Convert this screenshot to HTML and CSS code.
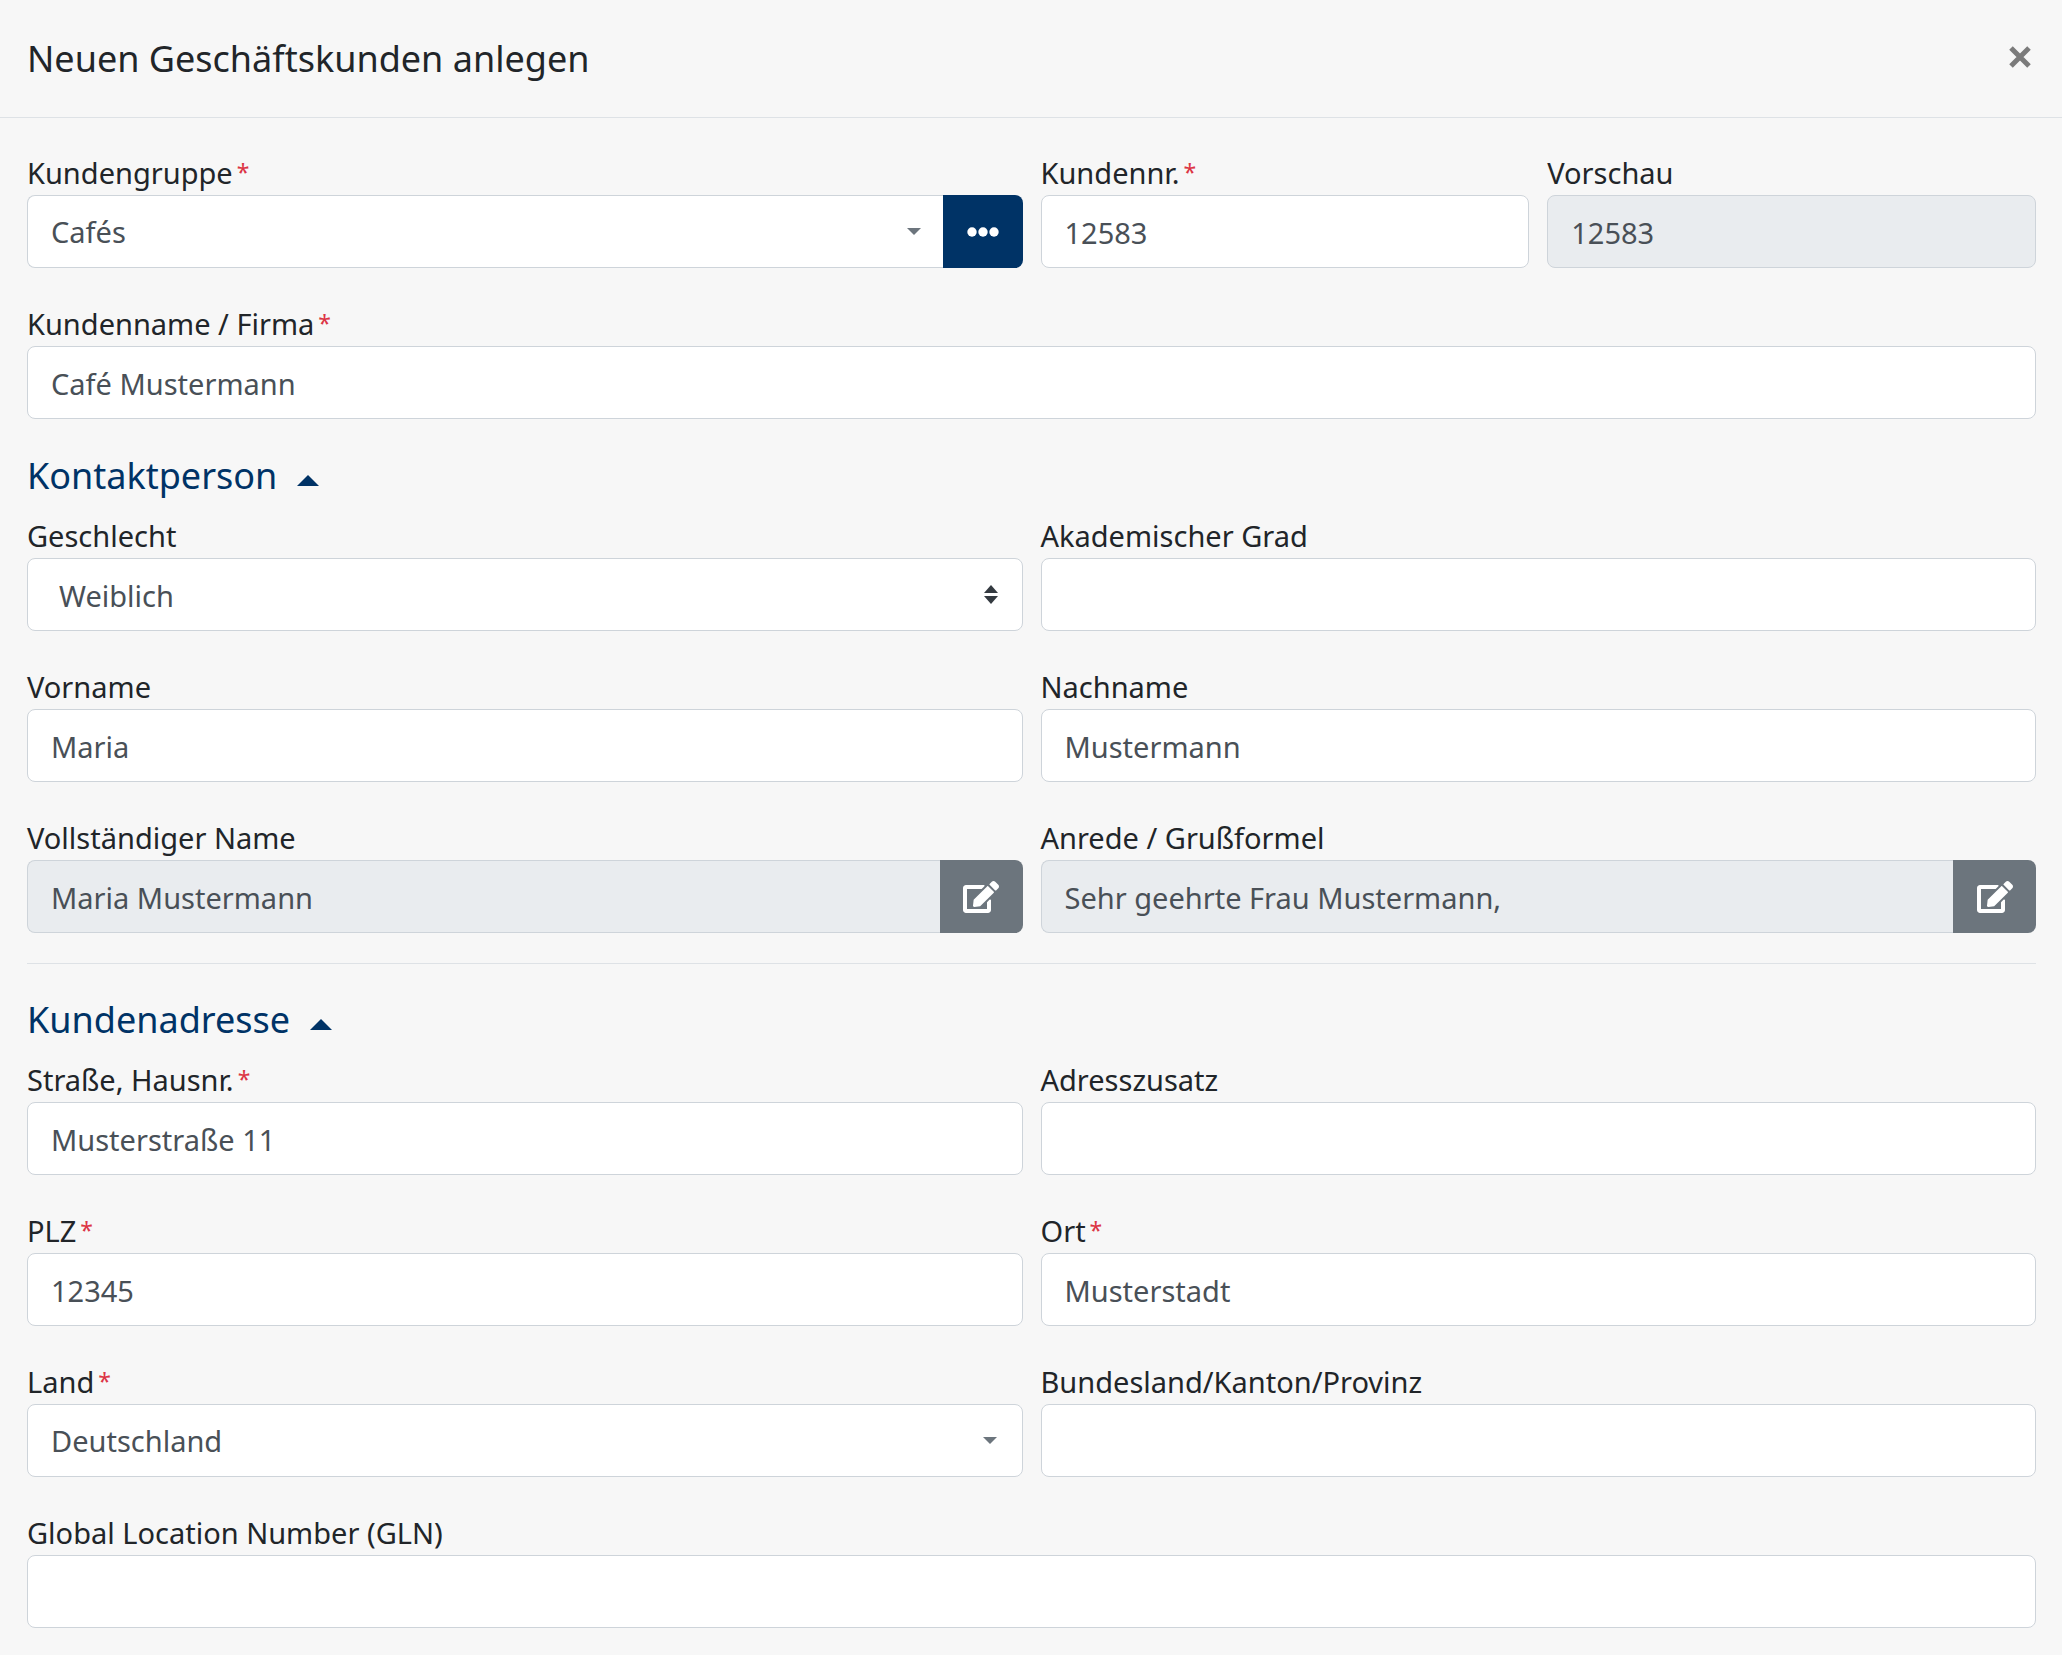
FILE: index.html
```html
<!DOCTYPE html>
<html lang="de">
<head>
<meta charset="utf-8">
<meta name="viewport" content="width=device-width, initial-scale=1">
<title>Neuen Geschäftskunden anlegen</title>
<link rel="stylesheet" href="styles.css">
</head>
<body>
<svg class="sprite" aria-hidden="true">
  <symbol id="icon-edit" viewBox="0 0 576 512"><path d="M402.6 83.2l90.2 90.2c3.800 3.800 3.800 10 0 13.800L274.400 405.600l-92.800 10.300c-12.400 1.400-22.900-9.100-21.500-21.500l10.300-92.800L388.800 83.200c3.800-3.800 10-3.800 13.800 0zm162-22.900l-48.800-48.800c-15.200-15.200-39.900-15.200-55.200 0l-35.400 35.400c-3.800 3.800-3.800 10 0 13.800l90.200 90.200c3.800 3.800 10 3.800 13.800 0l35.400-35.400c15.200-15.300 15.200-40 0-55.200zM384 346.200V448H64V128h229.800c3.200 0 6.200-1.300 8.500-3.500l40-40c7.600-7.600 2.200-20.500-8.500-20.500H48C21.500 64 0 85.500 0 112v352c0 26.500 21.500 48 48 48h352c26.500 0 48-21.500 48-48V306.200c0-10.700-12.900-16-20.500-8.500l-40 40c-2.200 2.300-3.500 5.300-3.500 8.500z"/></symbol>
  <symbol id="icon-caret-down" viewBox="0 0 14 7"><path d="M0 0h14L7 7z"/></symbol>
  <symbol id="icon-caret-up" viewBox="0 0 22 11"><path d="M0 11h22L11 0z"/></symbol>
</svg>

<header class="dialog-header">
  <h1 class="dialog-title">Neuen Geschäftskunden anlegen</h1>
  <button type="button" class="close" aria-label="Schließen">
    <svg width="22" height="22" viewBox="0 0 22 22"><path d="M2 2l18 18M20 2L2 20"/></svg>
  </button>
</header>

<form class="dialog-body">
  <div class="fields">
    <div class="field field-half">
      <label class="label" for="gruppe">Kundengruppe<span class="required">*</span></label>
      <div class="group">
        <div class="select-wrap">
          <select class="control" id="gruppe"><option>Cafés</option></select>
          <svg class="caret caret-grouped" width="14" height="7"><use href="#icon-caret-down"/></svg>
        </div>
        <button type="button" class="addon addon-primary" aria-label="Kundengruppe auswählen">
          <svg width="32" height="10" viewBox="0 0 32 10"><circle cx="5" cy="5" r="4.700"/><circle cx="16" cy="5" r="4.700"/><circle cx="27" cy="5" r="4.700"/></svg>
        </button>
      </div>
    </div>
    <div class="field">
      <label class="label" for="nummer">Kundennr.<span class="required">*</span></label>
      <input class="control" type="text" id="nummer" value="12583">
    </div>
    <div class="field">
      <label class="label" for="vorschau">Vorschau</label>
      <input class="control" type="text" id="vorschau" value="12583" readonly>
    </div>
    <div class="field field-full">
      <label class="label" for="firma">Kundenname / Firma<span class="required">*</span></label>
      <input class="control" type="text" id="firma" value="Café Mustermann">
    </div>
  </div>

  <section class="section">
    <h2 class="section-title"><button type="button" class="toggle" aria-expanded="true">Kontaktperson<svg class="toggle-caret" width="22" height="11"><use href="#icon-caret-up"/></svg></button></h2>
    <div class="fields">
      <div class="field field-half">
        <label class="label" for="geschlecht">Geschlecht</label>
        <div class="select-wrap">
          <select class="control control-native" id="geschlecht"><option>Weiblich</option></select>
          <svg class="caret caret-native" width="14" height="19" viewBox="0 0 14 19"><path d="M7 0l7 8H0zM7 19l7-8H0z"/></svg>
        </div>
      </div>
      <div class="field field-half">
        <label class="label" for="grad">Akademischer Grad</label>
        <input class="control" type="text" id="grad">
      </div>
      <div class="field field-half">
        <label class="label" for="vorname">Vorname</label>
        <input class="control" type="text" id="vorname" value="Maria">
      </div>
      <div class="field field-half">
        <label class="label" for="nachname">Nachname</label>
        <input class="control" type="text" id="nachname" value="Mustermann">
      </div>
      <div class="field field-half">
        <label class="label" for="vollname">Vollständiger Name</label>
        <div class="group">
          <input class="control" type="text" id="vollname" value="Maria Mustermann" readonly>
          <button type="button" class="addon addon-secondary" aria-label="Namen bearbeiten"><svg width="36" height="32"><use href="#icon-edit"/></svg></button>
        </div>
      </div>
      <div class="field field-half">
        <label class="label" for="anrede">Anrede / Grußformel</label>
        <div class="group">
          <input class="control" type="text" id="anrede" value="Sehr geehrte Frau Mustermann," readonly>
          <button type="button" class="addon addon-secondary" aria-label="Anrede bearbeiten"><svg width="36" height="32"><use href="#icon-edit"/></svg></button>
        </div>
      </div>
    </div>
  </section>

  <hr class="divider">

  <section class="section">
    <h2 class="section-title"><button type="button" class="toggle" aria-expanded="true">Kundenadresse<svg class="toggle-caret" width="22" height="11"><use href="#icon-caret-up"/></svg></button></h2>
    <div class="fields">
      <div class="field field-half">
        <label class="label" for="strasse">Straße, Hausnr.<span class="required">*</span></label>
        <input class="control" type="text" id="strasse" value="Musterstraße 11">
      </div>
      <div class="field field-half">
        <label class="label" for="zusatz">Adresszusatz</label>
        <input class="control" type="text" id="zusatz">
      </div>
      <div class="field field-half">
        <label class="label" for="plz">PLZ<span class="required">*</span></label>
        <input class="control" type="text" id="plz" value="12345">
      </div>
      <div class="field field-half">
        <label class="label" for="ort">Ort<span class="required">*</span></label>
        <input class="control" type="text" id="ort" value="Musterstadt">
      </div>
      <div class="field field-half">
        <label class="label" for="land">Land<span class="required">*</span></label>
        <div class="select-wrap">
          <select class="control" id="land"><option>Deutschland</option></select>
          <svg class="caret" width="14" height="7"><use href="#icon-caret-down"/></svg>
        </div>
      </div>
      <div class="field field-half">
        <label class="label" for="region">Bundesland/Kanton/Provinz</label>
        <input class="control" type="text" id="region">
      </div>
      <div class="field field-full">
        <label class="label" for="gln">Global Location Number (GLN)</label>
        <input class="control" type="text" id="gln">
      </div>
    </div>
  </section>
</form>
</body>
</html>
```

FILE: styles.css
```css
*,
*::before,
*::after {
  box-sizing: border-box;
}

body {
  margin: 0;
  background: #f7f7f7;
  color: #212529;
  font-family: "Segoe UI", "Noto Sans", sans-serif;
  font-size: 29px;
  line-height: 44px;
}

button,
input,
select {
  margin: 0;
  font: inherit;
}

svg {
  display: block;
  fill: currentColor;
}

.sprite {
  display: none;
}

/* Header */

.dialog-header {
  display: flex;
  align-items: center;
  justify-content: space-between;
  min-height: 118px;
  padding: 0 26px 0 27px;
  border-bottom: 1px solid #dee2e6;
}

.dialog-title {
  margin: 0;
  font-size: 36px;
  font-weight: 400;
  line-height: 48px;
}

.close {
  padding: 0 5px 4px;
  border: 0;
  background: none;
  color: #7b7b7b;
}

.close path {
  fill: none;
  stroke: currentColor;
  stroke-width: 5;
}

/* Form grid */

.dialog-body {
  padding: 30px 26px 27px 27px;
}

.fields {
  display: grid;
  grid-template-columns: repeat(4, minmax(0, 1fr));
  gap: 31px 18px;
}

.field-half {
  grid-column: span 2;
}

.field-full {
  grid-column: 1 / -1;
}

.label {
  display: block;
  padding-top: 3px;
}

.required {
  margin-left: 4px;
  color: #dc3545;
  font-size: 23px;
  line-height: 1;
  vertical-align: 3px;
}

/* Controls */

.control {
  display: block;
  width: 100%;
  height: 73px;
  padding: 2px 23px 0;
  border: 1px solid #ced4da;
  border-radius: 8px;
  background: #fff;
  color: #495057;
  appearance: none;
}

select.control {
  padding-top: 0;
}

.control[readonly] {
  background: #e9ecef;
}

select.control-native {
  padding-top: 2px;
  padding-left: 31px;
}

.select-wrap {
  position: relative;
  flex: 1;
}

.caret {
  position: absolute;
  top: 33px;
  right: 26px;
  color: #6c757d;
  pointer-events: none;
}

.caret-grouped {
  right: 22px;
}

.caret-native {
  top: 27px;
  right: 25px;
  color: #343a40;
}

.group {
  display: flex;
}

.group .control {
  flex: 1;
  min-width: 0;
  border-right: 0;
  border-radius: 8px 0 0 8px;
}

.addon {
  display: grid;
  place-items: center;
  width: 83px;
  padding: 0;
  border: 0;
  border-radius: 0 8px 8px 0;
  color: #fff;
}

.addon-primary {
  width: 80px;
  background: #036;
}

.addon-secondary {
  background: #6c757d;
}

/* Sections */

.section-title {
  margin: 33px 0 11px;
  font-size: 36px;
  font-weight: 400;
  line-height: 48px;
}

.toggle {
  display: flex;
  align-items: center;
  gap: 20px;
  padding: 0;
  border: 0;
  background: none;
  color: #036;
}

.toggle-caret {
  margin-top: 8px;
}

.divider {
  height: 1px;
  margin: 30px 0 32px;
  border: 0;
  background: #dee2e6;
}

.divider + .section .section-title {
  margin-top: 0;
}
```
